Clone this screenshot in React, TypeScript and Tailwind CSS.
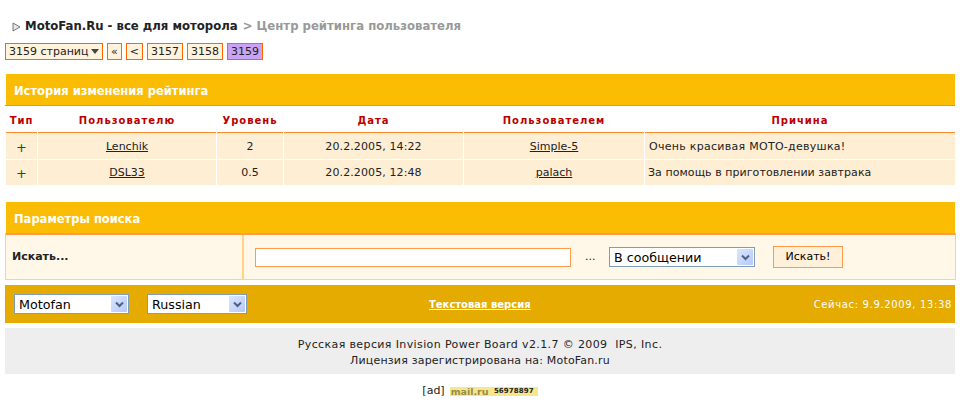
function FakeSelect({ label, className }: { label: string; className: string }) {
  return (
    <div className={`flex h-[20px] items-center justify-between border border-[#7f9db9] bg-white p-px text-[12.7px] text-black ${className}`}>
      <span className="pl-[3px] pt-px">{label}</span>
      <span className="flex h-[16px] w-[16px] items-center justify-center rounded-[1px] bg-gradient-to-br from-[#dbe6fd] to-[#b5c9f8]">
        <svg width="9" height="7" viewBox="0 0 9 7">
          <path d="M1 1.5 4.5 5 8 1.5" fill="none" stroke="#4d6185" strokeWidth="2" />
        </svg>
      </span>
    </div>
  )
}

function PageLink({ children, active }: { children: React.ReactNode; active?: boolean }) {
  return (
    <span className={`flex h-[17px] items-center border border-[#ff6600] px-[3px] ${active ? 'bg-[#c9a2f5]' : 'bg-[#fff3dd]'}`}>
      {children}
    </span>
  )
}

const rows = [
  { user: 'Lenchik', level: '2', date: '20.2.2005, 14:22', by: 'Simple-5', reason: 'Очень красивая МОТО-девушка!', h: 'h-[26px] pt-[3px]', track: 'tracking-[0.28px] pl-[4px]' },
  { user: 'DSL33', level: '0.5', date: '20.2.2005, 12:48', by: 'palach', reason: 'За помощь в приготовлении завтрака', h: 'h-[25px] pt-[2px]', track: 'tracking-[0.06px] pl-[3px]' },
]

const heads = ['Тип', 'Пользователю', 'Уровень', 'Дата', 'Пользователем', 'Причина']

export default function App() {
  return (
    <div className="min-h-[406px] w-[964px] overflow-hidden bg-white px-[5px] pt-[18px] font-['DejaVu_Sans',Verdana,sans-serif] text-[11px] text-[#222]">
      <div className="flex h-[16px] items-center pl-[7px] pt-px text-[11.7px] font-bold">
        <svg width="9" height="10" viewBox="0 0 9 10" className="mr-[4px]">
          <path d="M1 1 8 5 1 9Z" fill="#e8e8e8" stroke="#777" />
        </svg>
        <span className="text-[#222]">MotoFan.Ru - все для моторола</span>
        <span className="ml-[5px] text-[#999]">&gt; Центр рейтинга пользователя</span>
      </div>

      <div className="mt-[9px] flex h-[17px] items-center gap-[4px] leading-none">
        <span className="flex h-[17px] w-[98px] items-center justify-between border border-[#ff6600] bg-[#fff3dd] pl-[3px] pr-[2px]">
          3159 страниц
          <svg width="9" height="6" viewBox="0 0 9 6">
            <path d="M0 0H8L4 5Z" fill="#444" />
          </svg>
        </span>
        <PageLink>«</PageLink>
        <PageLink>&lt;</PageLink>
        <PageLink>3157</PageLink>
        <PageLink>3158</PageLink>
        <PageLink active>3159</PageLink>
      </div>

      <div className="ml-px mt-[14px] flex h-[31px] w-[949px] items-center bg-[#fabd03] pl-[8px] pt-[4px] text-[11.5px] font-bold text-white">
        История изменения рейтинга
      </div>
      <div className="h-px w-[950px] bg-[#ff8a2b]" />

      <div className="grid w-[950px] grid-cols-[31px_178px_66px_179px_180px_1fr] gap-x-px pl-px">
        {heads.map((h) => (
          <div key={h} className="flex h-[27px] items-center justify-center border-b border-[#ff8a2b] pt-[2px] text-[10px] font-bold tracking-[1px] text-[#bb0000]">
            {h}
          </div>
        ))}
      </div>

      <div className="grid w-[950px] grid-cols-[31px_178px_66px_179px_180px_1fr] gap-px pl-px">
        {rows.map((r) => (
          <div key={r.user} className="contents">
            <div className={`flex items-center justify-center bg-[#fdeed4] text-[13px] text-[#006600] ${r.h}`}>+</div>
            <div className={`flex items-center justify-center bg-[#fdeed4] ${r.h}`}><span className="underline">{r.user}</span></div>
            <div className={`flex items-center justify-center bg-[#fdeed4] ${r.h}`}>{r.level}</div>
            <div className={`flex items-center justify-center bg-[#fdeed4] tracking-[0.1px] ${r.h}`}>{r.date}</div>
            <div className={`flex items-center justify-center bg-[#fdeed4] ${r.h}`}><span className="underline">{r.by}</span></div>
            <div className={`flex items-center bg-[#fdeed4] ${r.h} ${r.track}`}>{r.reason}</div>
          </div>
        ))}
      </div>

      <div className="ml-px mt-[17px] flex h-[31px] w-[949px] items-center bg-[#fabd03] pl-[8px] pt-[4px] text-[11.5px] font-bold text-white">
        Параметры поиска
      </div>

      <div className="flex h-[47px] w-[951px] border border-t-2 border-[#ffd383] border-t-[#ff9a4d] bg-[#fff8e9]">
        <div className="flex w-[238px] items-center border-r-2 border-[#ffd383] pl-[6px] font-bold">Искать...</div>
        <div className="flex flex-1 items-center pl-[11px]">
          <div className="h-[19px] w-[316px] border border-[#ff9a4d] bg-white" />
          <span className="ml-[14px] w-[24px]">...</span>
          <FakeSelect label="В сообщении" className="w-[146px]" />
          <span className="ml-[18px] flex h-[22px] w-[70px] items-center justify-center border border-[#ff9a4d] bg-[#fff0d9] text-black">
            Искать!
          </span>
        </div>
      </div>

      <div className="mt-[5px] flex h-[38px] w-[950px] items-center bg-[#e5ab00] pl-[9px] pr-[3px] text-white">
        <div className="flex w-[415px] gap-[18px]">
          <FakeSelect label="Motofan" className="w-[115px]" />
          <FakeSelect label="Russian" className="w-[100px]" />
        </div>
        <span className="text-[10px] font-bold underline">Текстовая версия</span>
        <span className="ml-auto text-[10px] tracking-[0.65px]">Сейчас: 9.9.2009, 13:38</span>
      </div>

      <div className="mt-[5px] flex h-[46px] w-[950px] flex-col items-center justify-center bg-[#eeeeee] pt-[3px] leading-[16px]">
        <span className="tracking-[0.38px]">Русская версия Invision Power Board v2.1.7 © 2009 &nbsp;IPS, Inc.</span>
        <span className="tracking-[0.18px]">Лицензия зарегистрирована на: MotoFan.ru</span>
      </div>

      <div className="mt-[9px] flex w-[950px] items-center justify-center gap-[5px]">
        <span>[ad]</span>
        <span className="flex h-[9px] w-[88px] items-center justify-between bg-[#f5e78e] pl-px pr-[4px] text-[7px] font-bold leading-none">
          <span className="text-[9.5px] text-[#9a8a48]">mail.ru</span>
          <span className="tracking-[0.1px] text-[#222]">56978897</span>
        </span>
      </div>
    </div>
  )
}
